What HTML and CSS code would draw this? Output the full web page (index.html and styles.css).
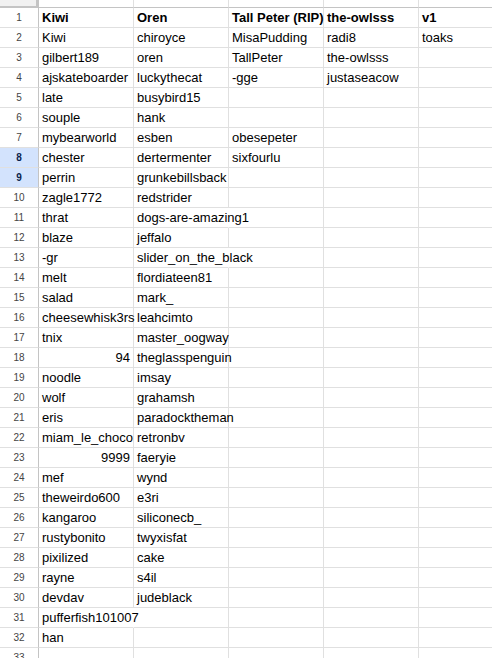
FILE: index.html
```html
<!DOCTYPE html>
<html>
<head>
<meta charset="utf-8">
<link rel="stylesheet" href="styles.css">
</head>
<body>
<div class="sheet">
  <div class="corner"></div><div class="colhead"></div><div class="colhead"></div><div class="colhead"></div><div class="colhead"></div><div class="colhead last"></div>

  <div class="rh">1</div><div class="c b">Kiwi</div><div class="c b">Oren</div><div class="c b">Tall Peter (RIP)</div><div class="c b">the-owlsss</div><div class="c b">v1</div>
  <div class="rh">2</div><div class="c">Kiwi</div><div class="c">chiroyce</div><div class="c">MisaPudding</div><div class="c">radi8</div><div class="c">toaks</div>
  <div class="rh">3</div><div class="c">gilbert189</div><div class="c">oren</div><div class="c">TallPeter</div><div class="c">the-owlsss</div><div class="c"></div>
  <div class="rh">4</div><div class="c">ajskateboarder</div><div class="c">luckythecat</div><div class="c">-gge</div><div class="c">justaseacow</div><div class="c"></div>
  <div class="rh">5</div><div class="c">late</div><div class="c">busybird15</div><div class="c"></div><div class="c"></div><div class="c"></div>
  <div class="rh">6</div><div class="c">souple</div><div class="c">hank</div><div class="c"></div><div class="c"></div><div class="c"></div>
  <div class="rh">7</div><div class="c">mybearworld</div><div class="c">esben</div><div class="c">obesepeter</div><div class="c"></div><div class="c"></div>
  <div class="rh sel">8</div><div class="c">chester</div><div class="c">dertermenter</div><div class="c">sixfourlu</div><div class="c"></div><div class="c"></div>
  <div class="rh sel">9</div><div class="c">perrin</div><div class="c">grunkebillsback</div><div class="c"></div><div class="c"></div><div class="c"></div>
  <div class="rh">10</div><div class="c">zagle1772</div><div class="c">redstrider</div><div class="c"></div><div class="c"></div><div class="c"></div>
  <div class="rh">11</div><div class="c">thrat</div><div class="c ov">dogs-are-amazing1</div><div class="c"></div><div class="c"></div><div class="c"></div>
  <div class="rh">12</div><div class="c">blaze</div><div class="c">jeffalo</div><div class="c"></div><div class="c"></div><div class="c"></div>
  <div class="rh">13</div><div class="c">-gr</div><div class="c ov">slider_on_the_black</div><div class="c"></div><div class="c"></div><div class="c"></div>
  <div class="rh">14</div><div class="c">melt</div><div class="c">flordiateen81</div><div class="c"></div><div class="c"></div><div class="c"></div>
  <div class="rh">15</div><div class="c">salad</div><div class="c">mark_</div><div class="c"></div><div class="c"></div><div class="c"></div>
  <div class="rh">16</div><div class="c">cheesewhisk3rs</div><div class="c">leahcimto</div><div class="c"></div><div class="c"></div><div class="c"></div>
  <div class="rh">17</div><div class="c">tnix</div><div class="c">master_oogway</div><div class="c"></div><div class="c"></div><div class="c"></div>
  <div class="rh">18</div><div class="c num">94</div><div class="c">theglasspenguin</div><div class="c"></div><div class="c"></div><div class="c"></div>
  <div class="rh">19</div><div class="c">noodle</div><div class="c">imsay</div><div class="c"></div><div class="c"></div><div class="c"></div>
  <div class="rh">20</div><div class="c">wolf</div><div class="c">grahamsh</div><div class="c"></div><div class="c"></div><div class="c"></div>
  <div class="rh">21</div><div class="c">eris</div><div class="c">paradocktheman</div><div class="c"></div><div class="c"></div><div class="c"></div>
  <div class="rh">22</div><div class="c clip">miam_le_chocolat</div><div class="c">retronbv</div><div class="c"></div><div class="c"></div><div class="c"></div>
  <div class="rh">23</div><div class="c num">9999</div><div class="c">faeryie</div><div class="c"></div><div class="c"></div><div class="c"></div>
  <div class="rh">24</div><div class="c">mef</div><div class="c">wynd</div><div class="c"></div><div class="c"></div><div class="c"></div>
  <div class="rh">25</div><div class="c">theweirdo600</div><div class="c">e3ri</div><div class="c"></div><div class="c"></div><div class="c"></div>
  <div class="rh">26</div><div class="c">kangaroo</div><div class="c">siliconecb_</div><div class="c"></div><div class="c"></div><div class="c"></div>
  <div class="rh">27</div><div class="c">rustybonito</div><div class="c">twyxisfat</div><div class="c"></div><div class="c"></div><div class="c"></div>
  <div class="rh">28</div><div class="c">pixilized</div><div class="c">cake</div><div class="c"></div><div class="c"></div><div class="c"></div>
  <div class="rh">29</div><div class="c">rayne</div><div class="c">s4il</div><div class="c"></div><div class="c"></div><div class="c"></div>
  <div class="rh">30</div><div class="c">devdav</div><div class="c">judeblack</div><div class="c"></div><div class="c"></div><div class="c"></div>
  <div class="rh">31</div><div class="c ov">pufferfish101007</div><div class="c"></div><div class="c"></div><div class="c"></div><div class="c"></div>
  <div class="rh">32</div><div class="c">han</div><div class="c"></div><div class="c"></div><div class="c"></div><div class="c"></div>
  <div class="rh">33</div><div class="c"></div><div class="c"></div><div class="c"></div><div class="c"></div><div class="c"></div>
</div>
</body>
</html>
```

FILE: styles.css
```css
html, body {
  margin: 0;
  padding: 0;
  background: #ffffff;
  overflow: hidden;
}

body {
  font-family: "Liberation Sans", Arial, sans-serif;
  color: #000000;
}

.sheet {
  display: grid;
  grid-template-columns: 39px 95px 95px 95px 95px 1fr;
  grid-template-rows: 8px;
  grid-auto-rows: 20px;
  width: 492px;
}

.corner {
  background: #f1f1f1;
  border-right: 3px solid #c4c4c4;
  border-bottom: 2px solid #c4c4c4;
  box-sizing: border-box;
}

.colhead {
  background: #ffffff;
  border-right: 1px solid #e0e0e0;
  border-bottom: 1px solid #c4c4c4;
  box-sizing: border-box;
}

.colhead.last {
  border-right: none;
}

.rh {
  box-sizing: border-box;
  border-right: 1px solid #c4c4c4;
  border-bottom: 1px solid #e0e0e0;
  font-size: 10px;
  color: #444444;
  text-align: center;
  line-height: 19px;
  background: #ffffff;
}

.rh.sel {
  background: #d3e3fd;
  color: #0b1f4d;
  font-weight: bold;
}

.c {
  box-sizing: border-box;
  border-right: 1px solid #e0e0e0;
  border-bottom: 1px solid #e0e0e0;
  font-size: 13px;
  line-height: 19px;
  padding: 0 3px;
  white-space: nowrap;
  overflow: visible;
}

.c:nth-child(6n) {
  border-right: none;
}

.c.b {
  font-weight: bold;
}

.c.num {
  text-align: right;
}

.c.ov {
  border-right-color: transparent;
}

.c.clip {
  overflow: hidden;
  text-overflow: clip;
}
```
